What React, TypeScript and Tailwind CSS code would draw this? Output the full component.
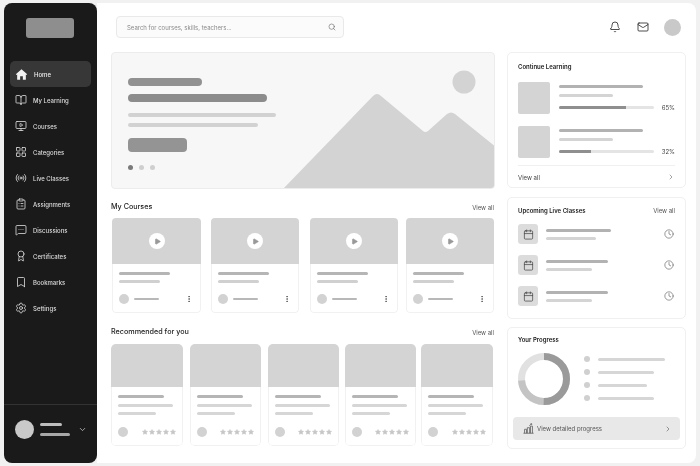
import {
  Award,
  BookOpen,
  Bookmark,
  Bell,
  Calendar,
  ChevronDown,
  ChevronRight,
  ClipboardList,
  Clock,
  EllipsisVertical,
  LayoutGrid,
  Mail,
  MessageSquareMore,
  MonitorPlay,
  Play,
  Radio,
  Search,
  Settings,
  Star,
} from 'lucide-react';

function HomeIcon() {
  return (
    <svg viewBox="0 0 24 24" className="w-[13px] h-[13px]" fill="#f2f2f2">
      <path d="M12 2.5 1.5 11.5l1.3 1.5L4 12v9.5h5.5V15h5v6.5H20V12l1.2 1 1.3-1.5z" />
    </svg>
  );
}

function BarsIcon() {
  return (
    <svg viewBox="0 0 14 14" className="w-[11px] h-[11px]" fill="none" stroke="#666666" strokeWidth="1.1">
      <path d="M.5 13h13M2 13V8h2.5v5M5.5 13V6h3v7M9.5 13V4H12v9M8 3.5 11 1M9.5 1H11v1.5" />
    </svg>
  );
}

const navItems = [
  { label: 'My Learning', icon: BookOpen },
  { label: 'Courses', icon: MonitorPlay },
  { label: 'Categories', icon: LayoutGrid },
  { label: 'Live Classes', icon: Radio },
  { label: 'Assignments', icon: ClipboardList },
  { label: 'Discussions', icon: MessageSquareMore },
  { label: 'Certificates', icon: Award },
  { label: 'Bookmarks', icon: Bookmark },
  { label: 'Settings', icon: Settings },
];

const myCourses = ['w-[89px]', 'w-[88px] ml-[10px]', 'w-[88px] ml-[11px]', 'w-[88px] ml-[8px]'];
const recommended = ['w-[72px]', 'w-[71px] ml-[7px]', 'w-[71px] ml-[7px]', 'w-[71px] ml-[6px]', 'w-[72px] ml-[5px]'];

function Sidebar() {
  return (
    <aside className="w-[93px] shrink-0 bg-[#1a1a1a] rounded-lg flex flex-col [will-change:transform]">
      <div className="w-[48px] h-[20px] mt-[15px] ml-[22px] rounded-[3px] bg-[#8e8e8e]" />
      <nav className="mt-[23px] px-[6px] flex flex-col">
        <div className="h-[26px] flex items-center bg-[#373737] rounded-[5px] pl-[5px] gap-[6px]">
          <HomeIcon />
          <span className="text-[6px] text-[#eeeeee] font-medium">Home</span>
        </div>
        {navItems.map((item) => (
          <div key={item.label} className="h-[26px] flex items-center pl-[5px] gap-[6px]">
            <item.icon className="w-[12px] h-[12px] text-[#e0e0e0]" strokeWidth={1.6} />
            <span className="text-[6px] text-[#dddddd] font-medium whitespace-nowrap">{item.label}</span>
          </div>
        ))}
      </nav>
      <div className="mt-auto h-[59px] border-t border-[#333333] flex items-center pl-[11px] pb-[10px]">
        <div className="w-[19px] h-[19px] rounded-full bg-[#c9c9c9]" />
        <div className="ml-[6px] flex flex-col gap-[7px]">
          <div className="w-[22px] h-[3px] rounded-full bg-[#bdbdbd]" />
          <div className="w-[30px] h-[3px] rounded-full bg-[#a8a8a8]" />
        </div>
        <ChevronDown className="ml-[8px] w-[9px] h-[9px] text-[#cccccc]" strokeWidth={2} />
      </div>
    </aside>
  );
}

function Hero() {
  return (
    <section className="relative h-[137px] rounded-[4px] border border-[#ececec] bg-[#f7f7f7] overflow-hidden pl-[16px] pt-[25px]">
      <svg viewBox="0 0 384 137" className="absolute -top-px -left-px w-[384px] h-[137px]">
        <circle cx="353" cy="30" r="11.5" fill="#d3d3d3" />
        <path
          d="M172 137 262 44Q266 40 270 44L312 79Q314 81 317 79L336 62Q340 59 344 62L385 95V137Z"
          fill="#d3d3d3"
        />
      </svg>
      <div className="relative">
        <div className="w-[74px] h-[8px] rounded-full bg-[#919191]" />
        <div className="w-[139px] h-[8px] rounded-full bg-[#8c8c8c] mt-[8px]" />
        <div className="w-[148px] h-[4px] rounded-full bg-[#d2d2d2] mt-[11px]" />
        <div className="w-[130px] h-[4px] rounded-full bg-[#d2d2d2] mt-[6px]" />
        <div className="w-[59px] h-[14px] rounded-[4px] bg-[#949494] mt-[11px]" />
        <div className="flex gap-[6px] mt-[13px]">
          <div className="w-[5px] h-[5px] rounded-full bg-[#7a7a7a]" />
          <div className="w-[5px] h-[5px] rounded-full bg-[#cfcfcf]" />
          <div className="w-[5px] h-[5px] rounded-full bg-[#cfcfcf]" />
        </div>
      </div>
    </section>
  );
}

function SectionHead({ title }: { title: string }) {
  return (
    <div className="h-[12px] flex items-center justify-between">
      <h2 className="text-[7.2px] font-medium text-[#222222]">{title}</h2>
      <span className="text-[6px] text-[#555555] mr-[1px]">View all</span>
    </div>
  );
}

function CourseCard({ cls }: { cls: string }) {
  return (
    <div className={`${cls} h-[95px] shrink-0 rounded-[4px] bg-white overflow-hidden flex flex-col`}>
      <div className="h-[46px] bg-[#d4d4d4] flex items-center justify-center">
        <div className="w-[16px] h-[16px] rounded-full bg-white flex items-center justify-center">
          <Play className="w-[7px] h-[7px] text-[#999999] ml-px" fill="#999999" />
        </div>
      </div>
      <div className="flex-1 rounded-b-[4px] border-x border-b border-[#f1f1f1] px-[6px] pt-[8px]">
        <div className="w-[51px] h-[3px] rounded-full bg-[#b5b5b5]" />
        <div className="w-[41px] h-[3px] rounded-full bg-[#d0d0d0] mt-[5px]" />
        <div className="flex items-center mt-[11px]">
          <div className="w-[10px] h-[10px] rounded-full bg-[#d2d2d2]" />
          <div className="w-[25px] h-[2px] rounded-full bg-[#b8b8b8] ml-[5px]" />
          <EllipsisVertical className="ml-auto mr-[1px] w-[8px] h-[8px] text-[#555555]" strokeWidth={2.5} />
        </div>
      </div>
    </div>
  );
}

function RecCard({ cls }: { cls: string }) {
  return (
    <div className={`${cls} h-[102px] shrink-0 rounded-[5px] bg-white overflow-hidden flex flex-col`}>
      <div className="h-[43px] bg-[#d4d4d4]" />
      <div className="flex-1 rounded-b-[4px] border-x border-b border-[#f1f1f1] px-[6px] pt-[8px]">
        <div className="w-[46px] h-[3px] rounded-full bg-[#b5b5b5]" />
        <div className="w-[55px] h-[3px] rounded-full bg-[#d6d6d6] mt-[6px]" />
        <div className="w-[38px] h-[3px] rounded-full bg-[#d6d6d6] mt-[5px]" />
        <div className="flex items-center justify-between mt-[12px]">
          <div className="w-[10px] h-[10px] rounded-full bg-[#d2d2d2]" />
          <div className="flex gap-[1px]">
            {[0, 1, 2, 3, 4].map((i) => (
              <Star key={i} className="w-[6px] h-[6px] text-[#c8c8c8]" fill="#c8c8c8" />
            ))}
          </div>
        </div>
      </div>
    </div>
  );
}

function ProgressRow({ pct, fill, first }: { pct: string; fill: string; first?: boolean }) {
  return (
    <div className={`flex gap-[9px] ${first ? '' : 'mt-[12px]'}`}>
      <div className="w-[32px] h-[32px] rounded-[2px] bg-[#d4d4d4]" />
      <div className="flex-1 pt-[3px]">
        <div className="w-[84px] h-[3px] rounded-full bg-[#b2b2b2]" />
        <div className="w-[54px] h-[3px] rounded-full bg-[#d4d4d4] mt-[6px]" />
        <div className="flex items-center mt-[6px]">
          <div className="w-[95px] h-[3px] rounded-full bg-[#e4e4e4] overflow-hidden">
            <div className={`${fill} h-full bg-[#8f8f8f]`} />
          </div>
          <span className="ml-auto text-[6px] text-[#444444]">{pct}</span>
        </div>
      </div>
    </div>
  );
}

function LiveRow({ w1, w2 }: { w1: string; w2: string }) {
  return (
    <div className="h-[20px] flex items-center">
      <div className="w-[20px] h-[20px] rounded-[3px] bg-[#dcdcdc] flex items-center justify-center">
        <Calendar className="w-[11px] h-[11px] text-[#444444]" strokeWidth={1.6} />
      </div>
      <div className="ml-[8px] flex flex-col gap-[5px]">
        <div className={`${w1} h-[3px] rounded-full bg-[#b2b2b2]`} />
        <div className={`${w2} h-[3px] rounded-full bg-[#d4d4d4]`} />
      </div>
      <Clock className="ml-auto mr-[1px] w-[10px] h-[10px] text-[#666666]" strokeWidth={1.6} />
    </div>
  );
}

function RightColumn() {
  return (
    <div className="w-[179px] shrink-0 flex flex-col">
      <section className="h-[136px] rounded-[5px] border border-[#f0f0f0] bg-white px-[10px] pt-[9px]">
        <h2 className="text-[6px] font-semibold text-[#222222] leading-[10px]">Continue Learning</h2>
        <div className="mt-[10px]">
          <ProgressRow pct="65%" fill="w-[70%]" first />
          <ProgressRow pct="32%" fill="w-[34%]" />
        </div>
        <div className="mt-[7px] h-[23px] border-t border-[#f0f0f0] flex items-center justify-between">
          <span className="text-[6px] text-[#444444]">View all</span>
          <ChevronRight className="w-[8px] h-[8px] text-[#777777]" strokeWidth={2} />
        </div>
      </section>

      <section className="h-[122px] mt-[9px] rounded-[5px] border border-[#f0f0f0] bg-white px-[10px] pt-[7px]">
        <div className="flex items-center justify-between mb-[9px] h-[10px]">
          <h2 className="text-[6px] font-semibold text-[#222222]">Upcoming Live Classes</h2>
          <span className="text-[6px] text-[#555555]">View all</span>
        </div>
        <div className="flex flex-col gap-[11px]">
          <LiveRow w1="w-[65px]" w2="w-[50px]" />
          <LiveRow w1="w-[62px]" w2="w-[46px]" />
          <LiveRow w1="w-[62px]" w2="w-[46px]" />
        </div>
      </section>

      <section className="h-[122px] mt-[8px] rounded-[5px] border border-[#f0f0f0] bg-white px-[5px] pt-[7px]">
        <h2 className="ml-[5px] text-[6px] font-semibold text-[#222222] leading-[10px]">Your Progress</h2>
        <div className="flex ml-[5px] mt-[8px] h-[52px]">
          <svg viewBox="0 0 52 52" className="w-[52px] h-[52px]">
            <g fill="none" strokeWidth="7" transform="rotate(-90 26 26)">
              <circle cx="26" cy="26" r="22.5" stroke="#e1e1e1" />
              <circle cx="26" cy="26" r="22.5" stroke="#c4c4c4" strokeDasharray="33 108.4" strokeDashoffset="-70.7" />
              <circle cx="26" cy="26" r="22.5" stroke="#9a9a9a" strokeDasharray="70.7 70.7" />
            </g>
          </svg>
          <div className="ml-[14px] flex flex-col gap-[7px] py-[3px]">
            {['w-[67px]', 'w-[56px]', 'w-[49px]', 'w-[56px]'].map((w, i) => (
              <div key={i} className="flex items-center gap-[8px]">
                <div className="w-[6px] h-[6px] rounded-full bg-[#d0d0d0]" />
                <div className={`${w} h-[3px] rounded-full bg-[#d6d6d6]`} />
              </div>
            ))}
          </div>
        </div>
        <div className="mt-[12px] h-[23px] rounded-[4px] bg-[#e8e8e8] flex items-center pl-[10px] pr-[8px]">
          <BarsIcon />
          <span className="ml-[3px] text-[6px] text-[#555555]">View detailed progress</span>
          <ChevronRight className="ml-auto w-[8px] h-[8px] text-[#666666]" strokeWidth={2} />
        </div>
      </section>
    </div>
  );
}

export default function App() {
  return (
    <div className="w-[700px] h-[466px] bg-[#f1f1f1] py-[3px] pl-[4px] pr-[4px] flex overflow-hidden [font-family:Inter,'Noto_Sans',sans-serif]">
      <Sidebar />
      <main className="flex-1 bg-white rounded-r-lg pl-[14px] pr-[10px] pt-[13px] [will-change:transform]">
        <header className="h-[22px] flex items-center">
          <div className="ml-[5px] w-[228px] h-[22px] rounded-[4px] border border-[#e9e9e9] bg-[#fbfbfb] flex items-center pl-[10px] pr-[7px]">
            <span className="text-[6px] text-[#8a8a8a]">Search for courses, skills, teachers...</span>
            <Search className="ml-auto w-[8px] h-[8px] text-[#666666]" strokeWidth={1.8} />
          </div>
          <Bell className="ml-auto w-[12px] h-[12px] text-[#222222]" strokeWidth={1.6} />
          <Mail className="ml-[16px] w-[12px] h-[12px] text-[#222222]" strokeWidth={1.6} />
          <div className="ml-[15px] mr-[5px] w-[17px] h-[17px] rounded-full bg-[#c9c9c9]" />
        </header>
        <div className="flex gap-[12px] mt-[14px]">
          <div className="w-[384px] shrink-0">
            <Hero />
            <div className="mt-[12px]">
              <SectionHead title="My Courses" />
            </div>
            <div className="flex mt-[5px] pl-px">
              {myCourses.map((c) => (
                <CourseCard key={c} cls={c} />
              ))}
            </div>
            <div className="mt-[13px]">
              <SectionHead title="Recommended for you" />
            </div>
            <div className="flex mt-[6px]">
              {recommended.map((c, i) => (
                <RecCard key={i} cls={c} />
              ))}
            </div>
          </div>
          <RightColumn />
        </div>
      </main>
    </div>
  );
}
